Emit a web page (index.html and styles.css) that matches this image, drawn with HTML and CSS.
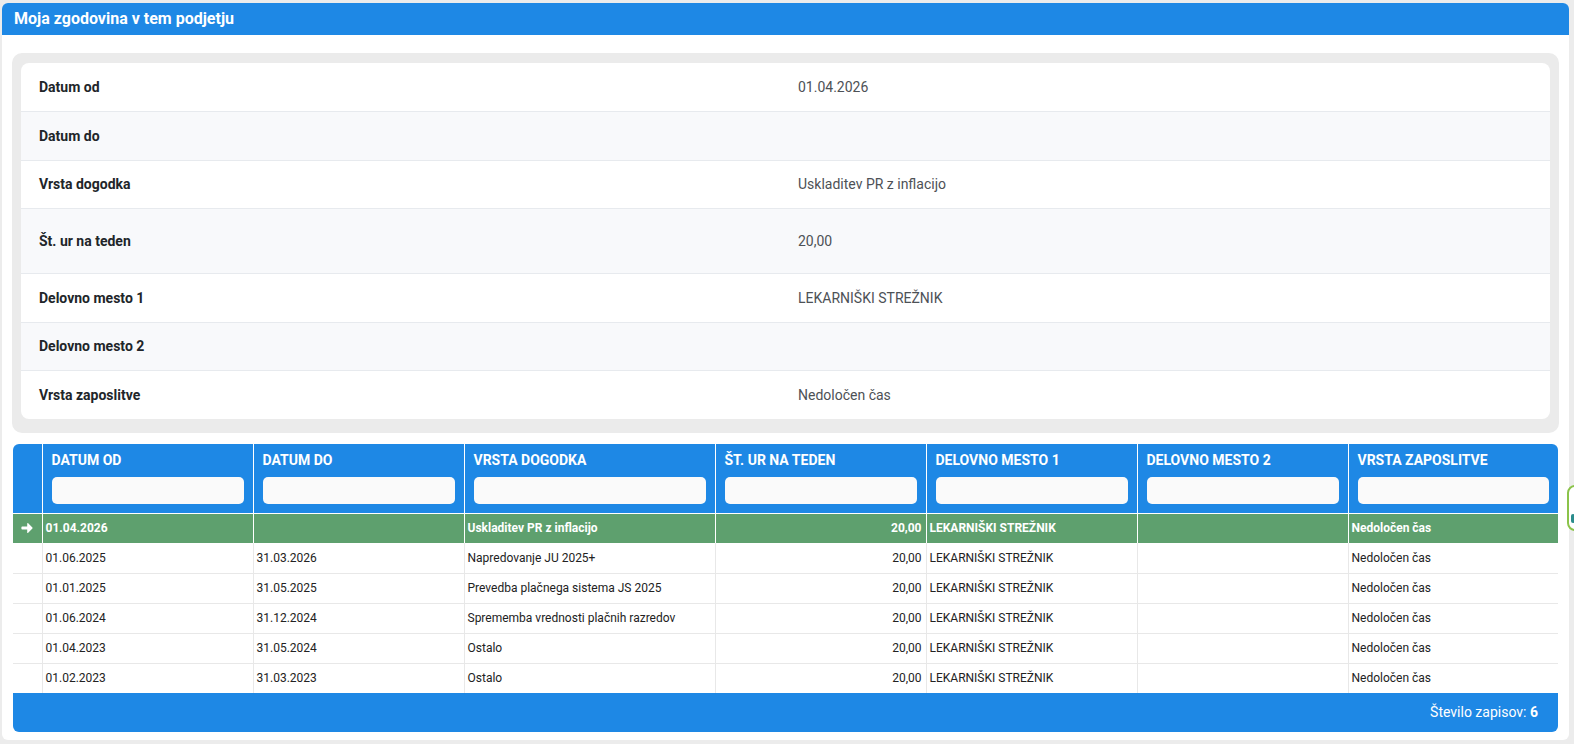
FILE: index.html
```html
<!DOCTYPE html>
<html lang="sl">
<head>
<meta charset="utf-8">
<title>Moja zgodovina v tem podjetju</title>
<link rel="stylesheet" href="styles.css">
</head>
<body>
<div class="card">
  <div class="card-header">Moja zgodovina v tem podjetju</div>
  <div class="card-body">
    <div class="detail-panel">
      <div class="detail-card">
        <div class="drow"><div class="dlabel">Datum od</div><div class="dvalue">01.04.2026</div></div>
        <div class="drow alt"><div class="dlabel">Datum do</div><div class="dvalue"></div></div>
        <div class="drow"><div class="dlabel">Vrsta dogodka</div><div class="dvalue">Uskladitev PR z inflacijo</div></div>
        <div class="drow alt tall"><div class="dlabel">Št. ur na teden</div><div class="dvalue">20,00</div></div>
        <div class="drow"><div class="dlabel">Delovno mesto 1</div><div class="dvalue">LEKARNIŠKI STREŽNIK</div></div>
        <div class="drow alt"><div class="dlabel">Delovno mesto 2</div><div class="dvalue"></div></div>
        <div class="drow"><div class="dlabel">Vrsta zaposlitve</div><div class="dvalue">Nedoločen čas</div></div>
      </div>
    </div>

    <div class="grid">
      <table class="gtable">
        <colgroup>
          <col class="c-ind"><col class="c-std"><col class="c-std"><col class="c-wide"><col class="c-std"><col class="c-std"><col class="c-std"><col class="c-last">
        </colgroup>
        <thead>
          <tr>
            <th class="ind"></th>
            <th><div class="hl">DATUM OD</div><div class="filter"></div></th>
            <th><div class="hl">DATUM DO</div><div class="filter"></div></th>
            <th><div class="hl">VRSTA DOGODKA</div><div class="filter"></div></th>
            <th><div class="hl">ŠT. UR NA TEDEN</div><div class="filter"></div></th>
            <th><div class="hl">DELOVNO MESTO 1</div><div class="filter"></div></th>
            <th><div class="hl">DELOVNO MESTO 2</div><div class="filter"></div></th>
            <th class="lastcol"><div class="hl">VRSTA ZAPOSLITVE</div><div class="filter"></div></th>
          </tr>
        </thead>
        <tbody>
          <tr class="sel">
            <td class="ind"><svg class="arrow" viewBox="0 0 12 12" width="12" height="12"><path d="M1.2 4.4h5V1.6c0-.5.6-.8 1-.4l4.2 4.2c.3.3.3.9 0 1.2L7.2 10.8c-.4.4-1 .1-1-.4V7.6h-5c-.5 0-.8-.4-.8-.8V5.2c0-.4.3-.8.8-.8z" fill="#fff"/></svg></td>
            <td>01.04.2026</td><td></td><td>Uskladitev PR z inflacijo</td><td class="num">20,00</td><td>LEKARNIŠKI STREŽNIK</td><td></td><td>Nedoločen čas</td>
          </tr>
          <tr>
            <td class="ind"></td><td>01.06.2025</td><td>31.03.2026</td><td>Napredovanje JU 2025+</td><td class="num">20,00</td><td>LEKARNIŠKI STREŽNIK</td><td></td><td>Nedoločen čas</td>
          </tr>
          <tr>
            <td class="ind"></td><td>01.01.2025</td><td>31.05.2025</td><td>Prevedba plačnega sistema JS 2025</td><td class="num">20,00</td><td>LEKARNIŠKI STREŽNIK</td><td></td><td>Nedoločen čas</td>
          </tr>
          <tr>
            <td class="ind"></td><td>01.06.2024</td><td>31.12.2024</td><td>Sprememba vrednosti plačnih razredov</td><td class="num">20,00</td><td>LEKARNIŠKI STREŽNIK</td><td></td><td>Nedoločen čas</td>
          </tr>
          <tr>
            <td class="ind"></td><td>01.04.2023</td><td>31.05.2024</td><td>Ostalo</td><td class="num">20,00</td><td>LEKARNIŠKI STREŽNIK</td><td></td><td>Nedoločen čas</td>
          </tr>
          <tr>
            <td class="ind"></td><td>01.02.2023</td><td>31.03.2023</td><td>Ostalo</td><td class="num">20,00</td><td>LEKARNIŠKI STREŽNIK</td><td></td><td>Nedoločen čas</td>
          </tr>
        </tbody>
      </table>
      <div class="gfooter">Število zapisov: <b>6</b></div>
    </div>
  </div>
</div>
<div class="side-tab"><span class="side-mark"></span></div>
</body>
</html>
```

FILE: styles.css
```css
* { box-sizing: border-box; }

html, body {
  margin: 0;
  padding: 0;
}

body {
  background: #ececec;
  font-family: Roboto, "Noto Sans", "Liberation Sans", sans-serif;
  color: #212529;
  width: 1574px;
  height: 744px;
  overflow: hidden;
  position: relative;
}

.card {
  margin: 3px 0 0 2px;
  width: 1567px;
  height: 737px;
  background: #fff;
  border-radius: 6px;
  overflow: hidden;
}

.card-header {
  height: 32px;
  background: #1e88e5;
  color: #fff;
  font-size: 16px;
  font-weight: 700;
  line-height: 31px;
  padding-left: 12px;
}

.card-body {
  padding: 18px 10px 9px 10px;
}

.detail-panel {
  background: #ebebeb;
  border-radius: 10px;
  padding: 10px 9px 14px 9px;
}

.detail-card {
  background: #fff;
  border-radius: 8px;
  overflow: hidden;
}

.drow {
  display: grid;
  grid-template-columns: 759px 1fr;
  align-items: center;
  height: 48.5px;
  border-top: 1px solid #e7eaee;
  font-size: 14px;
}

.drow:first-child { border-top: none; height: 48px; }

.drow.alt { background: #f8f9fb; }

.drow.tall { height: 65px; }

.dlabel {
  padding-left: 18px;
  font-weight: 700;
  color: #212529;
}

.dvalue {
  padding-left: 18px;
  color: #4d5156;
}

.grid {
  margin: 11px 1px 0 1px;
  border-radius: 6px;
  overflow: hidden;
}

.gtable {
  width: 1545px;
  border-collapse: collapse;
  table-layout: fixed;
}

.c-ind { width: 29px; }
.c-std { width: 211px; }
.c-wide { width: 251px; }
.c-last { width: 210px; }

.gtable thead th {
  background: #1e88e5;
  color: #fff;
  text-align: left;
  vertical-align: top;
  padding: 8px 9px 9px 9px;
  height: 69px;
  border-right: 1px solid #fff;
  border-bottom: 1px solid #fff;
  font-weight: 700;
  font-size: 14px;
}

.gtable thead th.ind { padding: 0; }
.gtable thead th.lastcol { border-right: none; }

.hl {
  line-height: 17px;
  height: 17px;
  margin-bottom: 8px;
  white-space: nowrap;
}

.filter {
  height: 27px;
  background: #fafafa;
  border-radius: 5px;
}

.gtable tbody td {
  height: 30px;
  padding: 0 4px 0 3px;
  font-size: 12px;
  color: #222;
  border-right: 1px solid #e8e8e8;
  border-bottom: 1px solid #e8e8e8;
  white-space: nowrap;
  overflow: hidden;
  vertical-align: middle;
}

.gtable tbody td:last-child { border-right: none; }

.gtable tbody td.num { text-align: right; }

.gtable tbody td.ind { padding: 0; text-align: center; }

.gtable tbody tr.sel td {
  background: #5ea06e;
  color: #fff;
  font-weight: 700;
  border-right: 1px solid #fff;
  border-bottom: none;
}

.gtable tbody tr.sel td:last-child { border-right: none; }

.arrow { display: block; margin: 0 auto; }

.gtable tbody tr:last-child td { border-bottom: none; }

.gfooter {
  background: #1e88e5;
  color: #fff;
  height: 39px;
  line-height: 39px;
  text-align: right;
  padding-right: 20px;
  font-size: 14px;
}

.gfooter b { font-weight: 700; }

.side-tab {
  position: absolute;
  left: 1567px;
  top: 485px;
  width: 24px;
  height: 46px;
  border: 2px solid #8bc34a;
  border-radius: 8px;
  background: #fff;
}

.side-mark {
  position: absolute;
  left: 2px;
  top: 27px;
  width: 4px;
  height: 9px;
  background: #2a8c8c;
  border-radius: 2px;
}
```
